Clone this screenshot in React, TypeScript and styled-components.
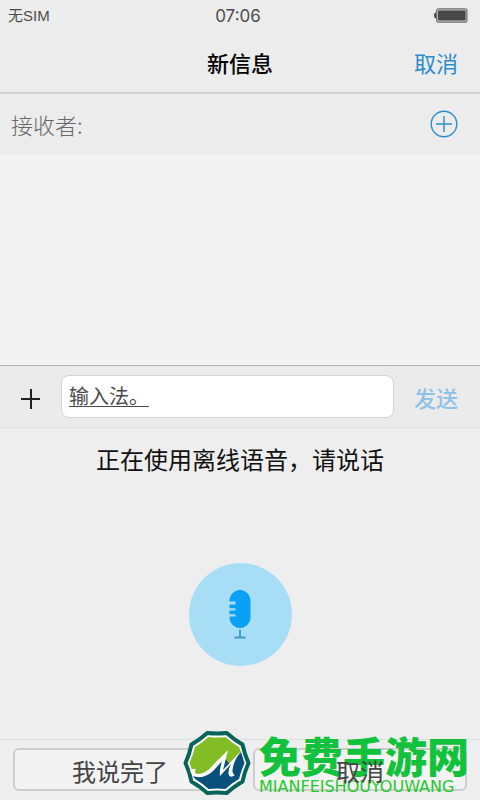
import React from "react";
import styled, { createGlobalStyle } from "styled-components";

const GlobalStyle = createGlobalStyle`
  * { box-sizing: border-box; }
  body {
    margin: 0;
    background: #eeeeee;
    font-family: "Noto Sans CJK SC", sans-serif;
  }
  button, input { font-family: inherit; }
`;

const Screen = styled.main`
  display: flex;
  flex-direction: column;
  min-height: 100vh;
  background: #eeeeee;
`;

const StatusBar = styled.div`
  display: grid;
  grid-template-columns: 1fr auto 1fr;
  align-items: center;
  height: 31px;
  padding: 0 12px 0 8px;
  background: #ececec;
  color: #4c4c4c;
`;

const Carrier = styled.span`
  font-family: "Liberation Sans", "Noto Sans CJK SC", sans-serif;
  font-size: 15px;
  line-height: 20px;
`;

const Clock = styled.time`
  font-family: Inter, sans-serif;
  font-size: 17px;
  line-height: 20px;
`;

const Battery = styled.svg`
  justify-self: end;
`;

const Header = styled.header`
  display: grid;
  grid-template-columns: 1fr auto 1fr;
  align-items: center;
  height: 63px;
  padding: 0 22px;
  background: #ececec;
  border-bottom: 2px solid #d2d2d2;
`;

const Title = styled.h1`
  grid-column: 2;
  margin: 0;
  font-size: 22px;
  line-height: 32px;
  font-weight: 500;
  color: #000000;
`;

const TextButton = styled.button<{ $color: string; $bold?: boolean }>`
  justify-self: end;
  padding: 0;
  border: 0;
  background: none;
  color: ${(p) => p.$color};
  font-size: 22px;
  line-height: 32px;
  font-weight: ${(p) => (p.$bold ? 500 : 400)};
`;

const Recipient = styled.div`
  display: flex;
  align-items: center;
  height: 61px;
  padding: 0 22px 2px 11px;
  background: #ececec;
`;

const RecipientLabel = styled.label`
  font-size: 22px;
  line-height: 32px;
  font-weight: 300;
  color: #686868;
`;

const RecipientInput = styled.input`
  flex: 1;
  min-width: 0;
  height: 40px;
  border: 0;
  background: none;
  font-size: 22px;
  outline: none;
`;

const IconButton = styled.button`
  display: flex;
  padding: 0;
  border: 0;
  background: none;
`;

const Conversation = styled.section`
  height: 210px;
  background: #f3f3f3;
`;

const Composer = styled.form`
  display: flex;
  align-items: center;
  height: 63px;
  padding: 0 22px 0 20px;
  background: #ebebeb;
  border-top: 1px solid #b5b5b5;
  border-bottom: 1px solid #e2e2e2;
`;

const MessageInput = styled.input`
  flex: 1;
  min-width: 0;
  height: 43px;
  margin: 0 20px;
  padding: 0 7px 2px;
  border: 1px solid #d4d4d4;
  border-radius: 8px;
  background: #ffffff;
  color: #4a4a4a;
  font-size: 20px;
  text-decoration: underline;
  text-decoration-thickness: 1px;
  text-underline-offset: 2px;
  outline: none;
`;

const VoicePanel = styled.section`
  display: flex;
  flex: 1;
  flex-direction: column;
  align-items: center;
  gap: 87px;
  padding-top: 14px;
`;

const Prompt = styled.p`
  margin: 0;
  font-size: 24px;
  line-height: 34px;
  color: #111111;
`;

const MicButton = styled.button`
  display: flex;
  align-items: center;
  justify-content: center;
  width: 103px;
  height: 103px;
  padding: 0;
  border: 0;
  border-radius: 50%;
  background: #a8def5;
`;

const Footer = styled.footer`
  position: relative;
  display: grid;
  grid-template-columns: 1fr 1fr;
  gap: 26px;
  height: 61px;
  padding: 8px 13px 9px;
  border-top: 1px solid #e0e0e0;
`;

const ActionButton = styled.button`
  padding: 2px 0 0;
  border: 2px solid #cdcdcd;
  border-radius: 6px;
  background: #f3f3f3;
  color: #444444;
  font-size: 24px;
  line-height: 34px;
`;

const ActionLabel = styled.span`
  position: relative;
  z-index: 2;
`;

const Watermark = styled.div`
  position: absolute;
  right: 11px;
  bottom: 4px;
  z-index: 1;
  display: flex;
  align-items: center;
  gap: 8px;
  pointer-events: none;
`;

const WatermarkText = styled.div`
  display: flex;
  flex-direction: column;
  color: #12c23c;
`;

const SiteName = styled.span`
  font-size: 42px;
  line-height: 48px;
  font-weight: 900;
`;

const SiteAddress = styled.span`
  font-family: "DejaVu Sans", sans-serif;
  font-size: 16px;
  line-height: 16px;
  color: #1fca2b;
`;

function BatteryIcon() {
  return (
    <Battery width="35" height="15" viewBox="0 0 35 15" aria-label="电量">
      <path d="M3.500 4.500H3Q1 4.500 1 7.500T3 10.500H3.500Z" fill="#4c4c4c" />
      <rect x="3.600" y=".8" width="30.400" height="13.400" rx="2" fill="#c9c9c9" stroke="#707070" strokeWidth="1.200" />
      <rect x="5" y="2.500" width="27.600" height="10" rx="1" fill="#484848" />
    </Battery>
  );
}

function AddIcon() {
  return (
    <svg width="28" height="28" viewBox="0 0 28 28" fill="none" stroke="#2c8dcc" strokeWidth="1.4">
      <circle cx="14" cy="14" r="12.8" />
      <path d="M6 14H22M14 6V22" />
    </svg>
  );
}

function PlusIcon() {
  return (
    <svg width="21" height="25" viewBox="0 0 21 25" stroke="#222" strokeWidth="2">
      <path d="M1 15H20M11 5V25" />
    </svg>
  );
}

function MicIcon() {
  return (
    <svg width="26" height="52" viewBox="0 0 26 52">
      <path
        d="M2.500 12.500V12C2.500 6 7 1 13 1S23.500 6 23.500 12V28C23.500 34 19 39 13 39S2.500 34 2.500 28V27.500H8.500V25.200H2.500V21.500H8.500V19.200H2.500V15.500H8.500V12.500Z"
        fill="#0aa0f5"
      />
      <path d="M13 40.500V48M7.500 48.500H18.500" fill="none" stroke="#3d9dc9" strokeWidth="2" />
    </svg>
  );
}

function SiteLogo() {
  return (
    <svg width="68" height="66" viewBox="0 0 68 66">
      <path
        d="M65.500 33Q61.500 42 59.500 51.500Q51 56.500 43.700 63Q34 62 24.300 63Q17 56.500 8.500 51.500Q6.500 42 2.500 33Q6.500 24 8.500 14.500Q17 9.500 24.300 3Q34 4 43.700 3Q51 9.500 59.500 14.500Q61.500 24 65.500 33Z"
        fill="#ffffff"
        stroke="#08645a"
        strokeWidth="4"
        strokeLinejoin="round"
      />
      <path d="M25.500 7Q34 8 42.500 7Q49 13 56 17L58 22L36 48L13 45Q8 45 9 40L6.500 33Q10 25 12 17Q19 13 25.500 7Z" fill="#82bd26" />
      <path d="M10 46Q22 48 30 41L42 28L47 35L58 22L61.500 33Q58 41 56 49Q49 53 42.500 59Q34 58 25.500 59Q19 53 12 49Z" fill="#07517b" />
      <path
        d="M7 41Q11 37 13 40Q10 42 14 44Q23 44 30 35L45 20L40 40L58 21Q50 32 49.500 40Q49 44 52 45Q47 49 45.500 44Q45 39 48 34L37 46Q36 42 39 31L31 40Q21 50 10 46Z"
        fill="#ffffff"
      />
    </svg>
  );
}

export default function App() {
  return (
    <Screen>
      <GlobalStyle />
      <StatusBar>
        <Carrier>无SIM</Carrier>
        <Clock>07:06</Clock>
        <BatteryIcon />
      </StatusBar>
      <Header>
        <Title>新信息</Title>
        <TextButton type="button" $color="#2c8dcc">取消</TextButton>
      </Header>
      <Recipient>
        <RecipientLabel htmlFor="recipient">接收者:</RecipientLabel>
        <RecipientInput id="recipient" />
        <IconButton type="button" aria-label="添加联系人">
          <AddIcon />
        </IconButton>
      </Recipient>
      <Conversation />
      <Composer onSubmit={(e) => e.preventDefault()}>
        <IconButton type="button" aria-label="添加附件">
          <PlusIcon />
        </IconButton>
        <MessageInput aria-label="信息" defaultValue="输入法。" />
        <TextButton type="submit" $color="#90c2e8" $bold>发送</TextButton>
      </Composer>
      <VoicePanel>
        <Prompt>正在使用离线语音，请说话</Prompt>
        <MicButton type="button" aria-label="语音输入">
          <MicIcon />
        </MicButton>
      </VoicePanel>
      <Footer>
        <ActionButton type="button">我说完了</ActionButton>
        <ActionButton type="button">
          <ActionLabel>取消</ActionLabel>
        </ActionButton>
        <Watermark>
          <SiteLogo />
          <WatermarkText>
            <SiteName>免费手游网</SiteName>
            <SiteAddress>MIANFEISHOUYOUWANG</SiteAddress>
          </WatermarkText>
        </Watermark>
      </Footer>
    </Screen>
  );
}
